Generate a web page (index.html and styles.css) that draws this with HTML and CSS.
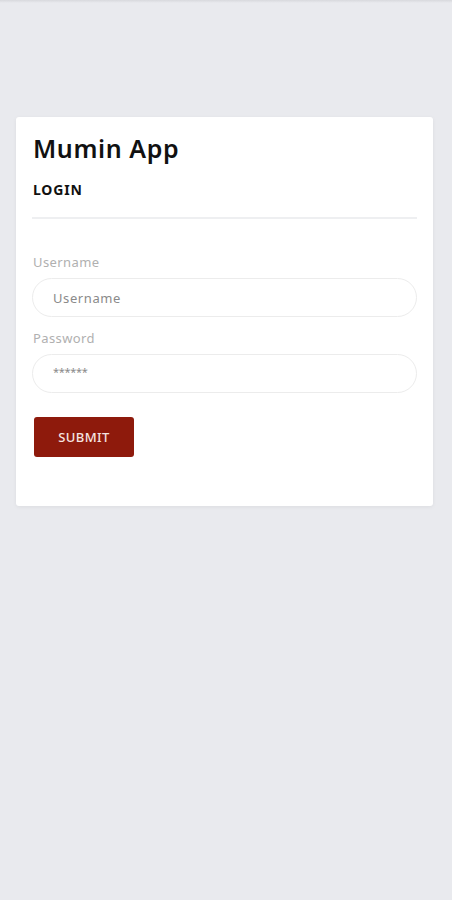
FILE: index.html
```html
<!DOCTYPE html>
<html>
<head>
<meta charset="utf-8">
<link rel="stylesheet" href="styles.css">
</head>
<body>
<div class="topbar"></div>
<main class="page">
  <section class="card">
    <h1 class="title">Mumin App</h1>
    <h2 class="subtitle">LOGIN</h2>
    <hr class="divider">
    <form class="form">
      <label class="label">Username</label>
      <input class="input" type="text" placeholder="Username">
      <label class="label">Password</label>
      <input class="input input-pass" type="password" placeholder="******">
      <button class="btn" type="button">SUBMIT</button>
    </form>
  </section>
</main>
</body>
</html>
```
FILE: styles.css
```css
html, body {
  margin: 0;
  padding: 0;
  background: #e9eaee;
  font-family: "Noto Sans", "Open Sans", sans-serif;
  height: 100%;
}
.topbar {
  height: 3px;
  background: linear-gradient(#d8d9dd, #e9eaee);
}
.page {
  padding: 114px 19px 0 16px;
}
.card {
  background: #fff;
  border-radius: 3px;
  box-shadow: 0 1px 4px rgba(0,0,0,0.06);
  padding: 14px 16px 48px 17px;
  height: 327px;
}
.title {
  margin: 0;
  font-size: 25px;
  font-weight: 600;
  color: #111;
  line-height: 34px;
  letter-spacing: 0.6px;
}
.subtitle {
  margin: 15px 0 0;
  font-size: 14px;
  font-weight: 700;
  color: #111;
  line-height: 20px;
  letter-spacing: 0.8px;
}
.divider {
  border: 0;
  border-top: 2px solid #eeeff1;
  margin: 17px 0 0 -1px;
}
.form {
  display: flex;
  flex-direction: column;
  align-items: flex-start;
  padding-top: 40px;
}
.label {
  font-size: 13px;
  color: #b0b0b0;
  line-height: 18px;
  margin-top: -6px;
  margin-bottom: 7px;
  letter-spacing: 0.4px;
}
.input {
  box-sizing: border-box;
  width: 385px;
  height: 39px;
  margin-left: -1px;
  border: 1px solid #ececec;
  border-radius: 20px;
  padding: 0 20px;
  font-family: inherit;
  font-size: 13px;
  color: #666;
  margin-bottom: 18px;
  outline: none;
  letter-spacing: 0.6px;
}
.input::placeholder {
  color: #8a8a8a;
}
.input-pass {
  font-size: 11px;
  letter-spacing: -0.3px;
  padding-bottom: 4px;
}
.btn {
  margin-top: 6px;
  margin-left: 1px;
  width: 100px;
  height: 40px;
  border: 0;
  border-radius: 3px;
  background: #8e1a0c;
  color: #f5e4e1;
  font-family: inherit;
  font-size: 13px;
  font-weight: 500;
  letter-spacing: 0.4px;
}
```
